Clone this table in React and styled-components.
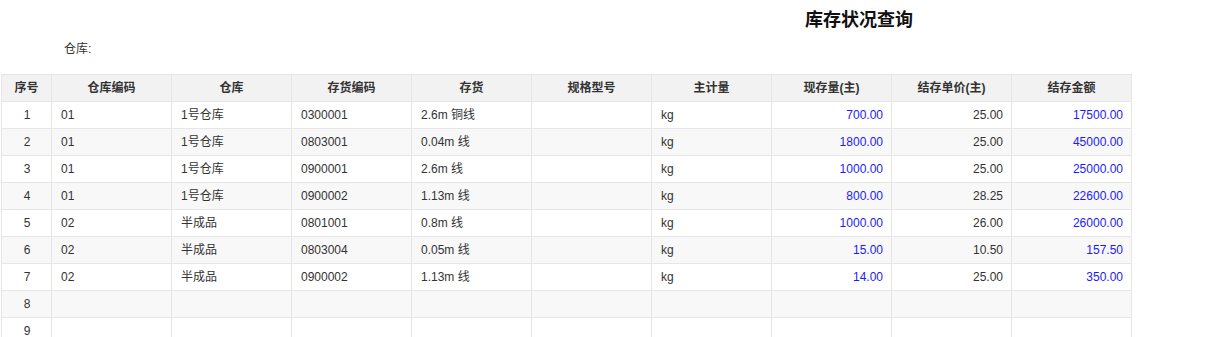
import React from 'react';
import styled, { createGlobalStyle } from 'styled-components';

const Global = createGlobalStyle`
    body {
        margin: 0;
        background: #fff;
        font-family: "Liberation Sans", Arial, "Noto Sans CJK SC", sans-serif;
        color: #333;
    }
`;

const Page = styled.div`
    width: 1209px;
    height: 337px;
    overflow: hidden;
`;

const Title = styled.h1`
    margin: 0;
    padding: 8px 0 0 805px;
    height: 32px;
    font-size: 18px;
    font-weight: bold;
    line-height: 24px;
    color: #111;
`;

const Filter = styled.div`
    padding-left: 64px;
    height: 34px;
    font-size: 12px;
    line-height: 18px;
    color: #333;
`;

const Table = styled.table`
    margin-left: 1px;
    border-collapse: collapse;
    table-layout: fixed;
    width: 1131px;
    font-size: 12px;
`;

const Th = styled.th`
    height: 26px;
    padding: 0;
    border: 1px solid #e6e6e6;
    background: #f2f2f2;
    font-weight: bold;
    line-height: 14px;
    color: #333;
    text-align: center;
`;

const Row = styled.tr`
    background: ${p => (p.$alt ? '#f8f8f8' : '#fff')};
`;

const Td = styled.td`
    height: 26px;
    padding: 0 8px 0 9px;
    border: 1px solid #e6e6e6;
    line-height: 14px;
    white-space: nowrap;
    text-align: ${p => p.$align || 'left'};
    color: ${p => (p.$blue ? '#1a1aff' : '#333')};
`;

const columns = ['仓库编码', '仓库', '存货编码', '存货', '规格型号', '主计量', '现存量(主)', '结存单价(主)', '结存金额'];

const rows = [
    ['01', '1号仓库', '0300001', '2.6m 铜线', '', 'kg', '700.00', '25.00', '17500.00'],
    ['01', '1号仓库', '0803001', '0.04m 线', '', 'kg', '1800.00', '25.00', '45000.00'],
    ['01', '1号仓库', '0900001', '2.6m 线', '', 'kg', '1000.00', '25.00', '25000.00'],
    ['01', '1号仓库', '0900002', '1.13m 线', '', 'kg', '800.00', '28.25', '22600.00'],
    ['02', '半成品', '0801001', '0.8m 线', '', 'kg', '1000.00', '26.00', '26000.00'],
    ['02', '半成品', '0803004', '0.05m 线', '', 'kg', '15.00', '10.50', '157.50'],
    ['02', '半成品', '0900002', '1.13m 线', '', 'kg', '14.00', '25.00', '350.00'],
    ['', '', '', '', '', '', '', '', ''],
    ['', '', '', '', '', '', '', '', ''],
];

export default function App() {
    return (
        <Page>
            <Global />
            <Title>库存状况查询</Title>
            <Filter>仓库:</Filter>
            <Table>
                <colgroup>
                    <col style={{ width: 50 }} />
                    {columns.map(c => <col key={c} style={{ width: 120 }} />)}
                </colgroup>
                <thead>
                    <tr>
                        <Th>序号</Th>
                        {columns.map(c => <Th key={c}>{c}</Th>)}
                    </tr>
                </thead>
                <tbody>
                    {rows.map((r, i) => (
                        <Row key={i} $alt={i % 2 === 1}>
                            <Td $align="center">{i + 1}</Td>
                            {r.map((v, j) => (
                                <Td key={j} $align={j >= 6 ? 'right' : 'left'} $blue={j === 6 || j === 8}>{v}</Td>
                            ))}
                        </Row>
                    ))}
                </tbody>
            </Table>
        </Page>
    );
}
